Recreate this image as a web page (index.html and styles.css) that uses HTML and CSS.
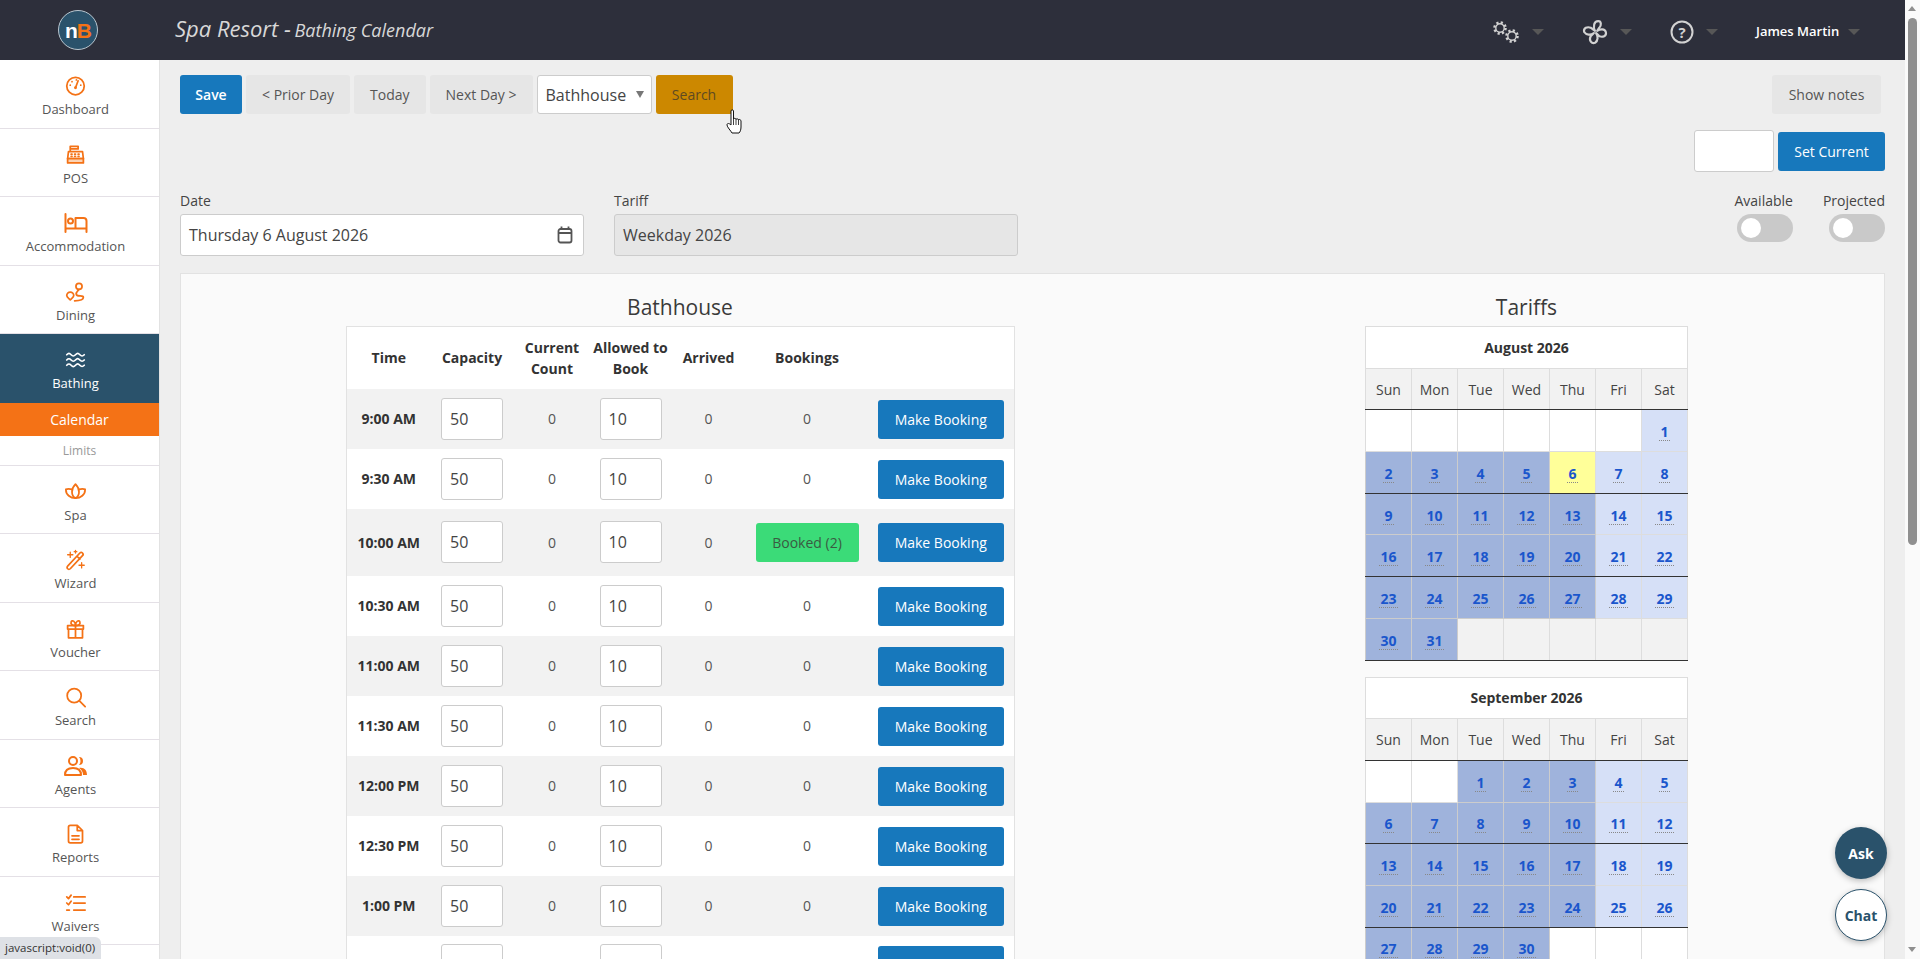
FILE: index.html
```html
<!DOCTYPE html>
<html>
<head>
  <title>Bathing Calendar</title>
  <link rel="stylesheet" href="styles.css">
</head>
<body>
  <div class="page">
    <header class="topbar">
      <div class="logo-box"><div class="logo"><span class="logo-n">n</span><span class="logo-b">B</span></div></div>
      <div class="title"><span class="title-main">Spa Resort -</span> <span class="title-sub">Bathing Calendar</span></div>
      <div class="top-right">
        <div class="top-item">
          <svg class="gears" viewBox="0 0 28 24" fill="none" stroke="#d2d2d2">
            <circle cx="8" cy="8" r="5.6" stroke-width="2.4" stroke-dasharray="2.2 2.2"/><circle cx="8" cy="8" r="4.2" stroke-width="1.4"/>
            <circle cx="20" cy="16" r="5.6" stroke-width="2.4" stroke-dasharray="2.2 2.2"/><circle cx="20" cy="16" r="4.2" stroke-width="1.4"/>
          </svg>
          <span class="caret"></span>
        </div>
        <div class="top-item">
          <svg class="fan" viewBox="0 0 24 24" fill="none" stroke="#d2d2d2" stroke-width="2" stroke-linejoin="round">
            <path d="M12 11C10 7 11 2 15 2c3 0 3 4 1 6l-2 3c3-2 7-2 8 1 1 4-3 5-6 4l-3-3c2 3 2 7-1 9-3 1-6-2-4-6l3-3c-3 2-7 2-9-1-1-4 3-5 6-4z"/>
          </svg>
          <span class="caret"></span>
        </div>
        <div class="top-item">
          <svg class="help" viewBox="0 0 24 24" fill="none" stroke="#d2d2d2" stroke-width="2">
            <circle cx="12" cy="12" r="10.5"/>
            <text x="12" y="17.5" text-anchor="middle" class="help-mark">?</text>
          </svg>
          <span class="caret"></span>
        </div>
        <div class="top-item">
          <span class="user">James Martin</span>
          <span class="caret"></span>
        </div>
      </div>
    </header>

    <div class="layout">
      <nav class="sidebar">
        <a class="nav-item">
          <svg class="nav-icon" viewBox="0 0 24 24"><circle cx="12" cy="12" r="10"/><path d="M12 14l3-8"/><circle class="dot" cx="12" cy="14" r="1.6"/><circle class="dot" cx="6" cy="11" r="1"/><circle class="dot" cx="8" cy="7" r="1"/><circle class="dot" cx="18" cy="11" r="1"/><circle class="dot" cx="13" cy="5" r="1"/></svg>
          <span>Dashboard</span>
        </a>
        <a class="nav-item">
          <svg class="nav-icon" viewBox="0 0 24 24"><path d="M6 7V2h9v3H6"/><path d="M4 8h16l1 8H3z"/><path class="fill-soft" d="M3 16h18v5H3z"/><path d="M7 11h1M11 11h1M15 11h1M7 13.500h1M11 13.500h1M15 13.500h1"/></svg>
          <span>POS</span>
        </a>
        <a class="nav-item">
          <svg class="nav-icon nav-icon-wide" viewBox="0 0 24 20"><path d="M1.500 1v18M1.500 15.500h21M22.500 19v-11a3 3 0 0 0-3-3h-8v10"/><circle cx="6.500" cy="8" r="2.500"/></svg>
          <span>Accommodation</span>
        </a>
        <a class="nav-item">
          <svg class="nav-icon" viewBox="0 0 24 24"><circle cx="16" cy="5.500" r="3.500"/><path d="M16 9c-1 2-4 3-3 6s8 0 8 3-3 4-10 4"/><path d="M6 21c-2-2-4-3-4-5a4 4 0 0 1 8 0c0 2-2 3-4 5z"/></svg>
          <span>Dining</span>
        </a>
        <a class="nav-item nav-item-active">
          <svg class="nav-icon" viewBox="0 0 24 24"><path d="M2 6c2-2 3-2 5 0s3 2 5 0 3-2 5 0 3 2 5 0M2 12c2-2 3-2 5 0s3 2 5 0 3-2 5 0 3 2 5 0M2 18c2-2 3-2 5 0s3 2 5 0 3-2 5 0 3 2 5 0"/></svg>
          <span>Bathing</span>
        </a>
        <a class="sub-item sub-item-active">Calendar</a>
        <a class="sub-item">Limits</a>
        <a class="nav-item">
          <svg class="nav-icon" viewBox="0 0 24 24"><path d="M12 3c3 3 4 6 4 9s-2 6-4 7c-2-1-4-4-4-7s1-6 4-9z"/><path d="M8 9c-3-1-5-1-7 0 0 6 5 10 11 10s11-4 11-10c-2-1-4-1-7 0"/></svg>
          <span>Spa</span>
        </a>
        <a class="nav-item">
          <svg class="nav-icon" viewBox="0 0 24 24"><path d="M3 19L17 4a2 2 0 0 1 3 3L6 22a2 2 0 0 1-3-3zM14 8l3 3"/><path class="thin" d="M6 3v6M3 6h6M19 15v6M16 18h6M12 1v3M10.500 2.500h3"/></svg>
          <span>Wizard</span>
        </a>
        <a class="nav-item">
          <svg class="nav-icon" viewBox="0 0 24 24"><path d="M3 8h18v4H3zM4 12h16v10H4zM12 8v14"/><path d="M12 8C9 8 6 7 7 4s5-1 5 4c0-5 4-7 5-4s-2 4-5 4z"/></svg>
          <span>Voucher</span>
        </a>
        <a class="nav-item">
          <svg class="nav-icon" viewBox="0 0 24 24"><circle cx="10.500" cy="10.500" r="8"/><path d="M16.500 16.500L23 23"/></svg>
          <span>Search</span>
        </a>
        <a class="nav-item">
          <svg class="nav-icon nav-icon-wide" viewBox="0 0 24 20"><circle cx="9" cy="5" r="4"/><path d="M1 19c0-5 3-7 8-7s8 2 8 7z"/><path class="solid" d="M15 1a4 4 0 0 1 0 8 6 6 0 0 0 0-8zM15 12c5-1 8 2 8 7h-4c0-3-1-5-4-7z"/></svg>
          <span>Agents</span>
        </a>
        <a class="nav-item">
          <svg class="nav-icon" viewBox="0 0 24 24"><path d="M6 2h8l6 6v12a2 2 0 0 1-2 2H6a2 2 0 0 1-2-2V4a2 2 0 0 1 2-2zM14 2v6h6M8 14h8M8 18h8"/></svg>
          <span>Reports</span>
        </a>
        <a class="nav-item">
          <svg class="nav-icon" viewBox="0 0 24 24"><path d="M2 5l2 2 3-4M2 12l2 2 3-4M2 20h3M10 5h13M10 12h13M10 20h13"/></svg>
          <span>Waivers</span>
        </a>
        <a class="nav-item">
          <svg class="nav-icon" viewBox="0 0 24 24"><circle cx="12" cy="12" r="9"/></svg>
          <span>Settings</span>
        </a>
      </nav>

      <main class="main">
        <div class="toolbar">
          <button class="btn btn-primary btn-save">Save</button>
          <button class="btn">&lt; Prior Day</button>
          <button class="btn">Today</button>
          <button class="btn">Next Day &gt;</button>
          <div class="select">Bathhouse<span class="select-caret"></span></div>
          <button class="btn btn-search">Search</button>
          <button class="btn btn-notes">Show notes</button>
        </div>

        <div class="current-row">
          <input type="text" class="field field-current">
          <button class="btn btn-primary btn-current">Set Current</button>
        </div>

        <div class="filter-row">
          <div class="filter-group">
            <label class="filter-label">Date</label>
            <div class="field date-field">Thursday 6 August 2026
              <svg class="date-icon" viewBox="0 0 16 18" fill="none" stroke="#555" stroke-width="1.800"><rect x="1.500" y="3" width="13" height="13.500" rx="2"/><path d="M1.500 7h13M4.500 .5v3M11.500 .5v3"/></svg>
            </div>
          </div>
          <div class="filter-group">
            <label class="filter-label">Tariff</label>
            <div class="field date-field field-disabled">Weekday 2026</div>
          </div>
          <div class="toggle-group toggle-first">
            <label class="filter-label">Available</label>
            <span class="toggle"></span>
          </div>
          <div class="toggle-group">
            <label class="filter-label">Projected</label>
            <span class="toggle"></span>
          </div>
        </div>

        <section class="panel">
          <div class="slots">
            <h3>Bathhouse</h3>
            <table class="slot-table">
              <thead>
                <tr>
                  <th class="col-time">Time</th>
                  <th class="col-cap">Capacity</th>
                  <th class="col-count">Current Count</th>
                  <th class="col-allowed">Allowed to Book</th>
                  <th class="col-arrived">Arrived</th>
                  <th class="col-bookings">Bookings</th>
                  <th class="col-action"></th>
                </tr>
              </thead>
              <tbody>
                <tr><th>9:00 AM</th><td><input class="field slot-input" value="50"></td><td>0</td><td><input class="field slot-input" value="10"></td><td>0</td><td>0</td><td><button class="btn btn-primary btn-book">Make Booking</button></td></tr>
                <tr><th>9:30 AM</th><td><input class="field slot-input" value="50"></td><td>0</td><td><input class="field slot-input" value="10"></td><td>0</td><td>0</td><td><button class="btn btn-primary btn-book">Make Booking</button></td></tr>
                <tr><th>10:00 AM</th><td><input class="field slot-input" value="50"></td><td>0</td><td><input class="field slot-input" value="10"></td><td>0</td><td><button class="btn btn-booked">Booked (2)</button></td><td><button class="btn btn-primary btn-book">Make Booking</button></td></tr>
                <tr><th>10:30 AM</th><td><input class="field slot-input" value="50"></td><td>0</td><td><input class="field slot-input" value="10"></td><td>0</td><td>0</td><td><button class="btn btn-primary btn-book">Make Booking</button></td></tr>
                <tr><th>11:00 AM</th><td><input class="field slot-input" value="50"></td><td>0</td><td><input class="field slot-input" value="10"></td><td>0</td><td>0</td><td><button class="btn btn-primary btn-book">Make Booking</button></td></tr>
                <tr><th>11:30 AM</th><td><input class="field slot-input" value="50"></td><td>0</td><td><input class="field slot-input" value="10"></td><td>0</td><td>0</td><td><button class="btn btn-primary btn-book">Make Booking</button></td></tr>
                <tr><th>12:00 PM</th><td><input class="field slot-input" value="50"></td><td>0</td><td><input class="field slot-input" value="10"></td><td>0</td><td>0</td><td><button class="btn btn-primary btn-book">Make Booking</button></td></tr>
                <tr><th>12:30 PM</th><td><input class="field slot-input" value="50"></td><td>0</td><td><input class="field slot-input" value="10"></td><td>0</td><td>0</td><td><button class="btn btn-primary btn-book">Make Booking</button></td></tr>
                <tr><th>1:00 PM</th><td><input class="field slot-input" value="50"></td><td>0</td><td><input class="field slot-input" value="10"></td><td>0</td><td>0</td><td><button class="btn btn-primary btn-book">Make Booking</button></td></tr>
                <tr><th>1:30 PM</th><td><input class="field slot-input" value="50"></td><td>0</td><td><input class="field slot-input" value="10"></td><td>0</td><td>0</td><td><button class="btn btn-primary btn-book">Make Booking</button></td></tr>
              </tbody>
            </table>
          </div>

          <div class="tariffs">
            <h3>Tariffs</h3>
            <table class="cal">
              <thead>
                <tr><th colspan="7" class="cal-title">August 2026</th></tr>
                <tr class="line"><td class="d1">Sun</td><td class="d2">Mon</td><td class="d3">Tue</td><td class="d4">Wed</td><td class="d5">Thu</td><td class="d6">Fri</td><td class="d7">Sat</td></tr>
              </thead>
              <tbody>
                <tr><td></td><td></td><td></td><td></td><td></td><td></td><td class="we"><a>1</a></td></tr>
                <tr class="line"><td class="wk"><a>2</a></td><td class="wk"><a>3</a></td><td class="wk"><a>4</a></td><td class="wk"><a>5</a></td><td class="today"><a>6</a></td><td class="we"><a>7</a></td><td class="we"><a>8</a></td></tr>
                <tr><td class="wk"><a>9</a></td><td class="wk"><a>10</a></td><td class="wk"><a>11</a></td><td class="wk"><a>12</a></td><td class="wk"><a>13</a></td><td class="we"><a>14</a></td><td class="we"><a>15</a></td></tr>
                <tr class="line"><td class="wk"><a>16</a></td><td class="wk"><a>17</a></td><td class="wk"><a>18</a></td><td class="wk"><a>19</a></td><td class="wk"><a>20</a></td><td class="we"><a>21</a></td><td class="we"><a>22</a></td></tr>
                <tr><td class="wk"><a>23</a></td><td class="wk"><a>24</a></td><td class="wk"><a>25</a></td><td class="wk"><a>26</a></td><td class="wk"><a>27</a></td><td class="we"><a>28</a></td><td class="we"><a>29</a></td></tr>
                <tr class="line"><td class="wk"><a>30</a></td><td class="wk"><a>31</a></td><td class="none"></td><td class="none"></td><td class="none"></td><td class="none"></td><td class="none"></td></tr>
              </tbody>
            </table>
            <table class="cal">
              <thead>
                <tr><th colspan="7" class="cal-title">September 2026</th></tr>
                <tr class="line"><td class="d1">Sun</td><td class="d2">Mon</td><td class="d3">Tue</td><td class="d4">Wed</td><td class="d5">Thu</td><td class="d6">Fri</td><td class="d7">Sat</td></tr>
              </thead>
              <tbody>
                <tr><td></td><td></td><td class="wk"><a>1</a></td><td class="wk"><a>2</a></td><td class="wk"><a>3</a></td><td class="we"><a>4</a></td><td class="we"><a>5</a></td></tr>
                <tr class="line"><td class="wk"><a>6</a></td><td class="wk"><a>7</a></td><td class="wk"><a>8</a></td><td class="wk"><a>9</a></td><td class="wk"><a>10</a></td><td class="we"><a>11</a></td><td class="we"><a>12</a></td></tr>
                <tr><td class="wk"><a>13</a></td><td class="wk"><a>14</a></td><td class="wk"><a>15</a></td><td class="wk"><a>16</a></td><td class="wk"><a>17</a></td><td class="we"><a>18</a></td><td class="we"><a>19</a></td></tr>
                <tr class="line"><td class="wk"><a>20</a></td><td class="wk"><a>21</a></td><td class="wk"><a>22</a></td><td class="wk"><a>23</a></td><td class="wk"><a>24</a></td><td class="we"><a>25</a></td><td class="we"><a>26</a></td></tr>
                <tr><td class="wk"><a>27</a></td><td class="wk"><a>28</a></td><td class="wk"><a>29</a></td><td class="wk"><a>30</a></td><td></td><td></td><td></td></tr>
              </tbody>
            </table>
          </div>
        </section>
      </main>
    </div>
  </div>

  <div class="scrollbar">
    <span class="arrow-up"></span>
    <span class="thumb"></span>
    <span class="arrow-down"></span>
  </div>

  <!-- things floating over the page -->
  <a class="float-btn float-ask">Ask</a>
  <a class="float-btn float-chat">Chat</a>
  <div class="status">javascript:void(0)</div>
  <svg class="cursor" viewBox="0 0 18 25" fill="#fff" stroke="#111" stroke-width="1" stroke-linejoin="round">
    <path d="M5 2c0-1.500 2.500-1.500 2.500 0v8c0-1 2.500-1 2.500 .5 0-1 2.500-1 2.500 .5 0-1 2.500-.5 2.500 1v6c0 3-1 5-2 6H6c-1-2-5-6-5-8s2-2 4 0z"/>
    <path d="M7.500 10v6M10 10.500v5.500M12.500 11v5" stroke-width=".8"/>
  </svg>
</body>
</html>
```
FILE: styles.css
```css
* {
  box-sizing: border-box;
}

html, body {
  margin: 0;
  height: 100%;
  overflow: hidden;
}

body {
  display: flex;
  font-family: "Open Sans", Arial, sans-serif;
  font-size: 14px;
  color: #444;
  background-color: #eee;
}

.page {
  flex: 1;
  min-width: 0;
  display: flex;
  flex-direction: column;
}

/* Top bar */
.topbar {
  flex: none;
  height: 60px;
  display: flex;
  align-items: center;
  background-color: #2d2f3b;
}

.logo-box {
  width: 175px;
  padding-left: 58px;
}

.logo {
  width: 40px;
  height: 40px;
  border-radius: 50%;
  border: 1px solid #b9c6cf;
  background-color: #2a526b;
  display: flex;
  align-items: center;
  justify-content: center;
  font-family: "Liberation Sans", Arial, sans-serif;
  font-weight: bold;
  font-size: 21px;
  line-height: 1;
  letter-spacing: -1px;
}

.logo-n {
  color: #fff;
}

.logo-b {
  color: #f47216;
}

.title {
  color: #d8d8d8;
  font-style: italic;
  margin-top: -5px;
}

.title-main {
  font-size: 22px;
}

.title-sub {
  font-size: 18px;
}

.top-right {
  margin-left: auto;
  padding-right: 45px;
  display: flex;
  align-items: center;
  gap: 38px;
  margin-top: 4px;
}

.top-item {
  display: flex;
  align-items: center;
  gap: 12px;
}

.gears {
  width: 28px;
  height: 24px;
}

.fan {
  width: 26px;
  height: 26px;
}

.help {
  width: 24px;
  height: 24px;
}

.help-mark {
  font-family: "Open Sans", Arial, sans-serif;
  font-size: 15px;
  font-weight: bold;
  fill: #d2d2d2;
  stroke: none;
}

.caret {
  width: 0;
  height: 0;
  border-left: 6px solid transparent;
  border-right: 6px solid transparent;
  border-top: 6px solid #575757;
}

.user {
  color: #fff;
  font-size: 13px;
  font-weight: 600;
  margin-top: -3px;
  width: 80px;
  white-space: nowrap;
}

.layout {
  flex: 1;
  min-height: 0;
  display: flex;
}

/* Sidebar */
.sidebar {
  flex: none;
  width: 160px;
  background-color: #fff;
  border-right: 1px solid #e2e2e2;
  overflow: hidden;
}

.nav-item {
  height: 68.5px;
  padding: 15px 8px 0 0;
  display: flex;
  flex-direction: column;
  align-items: center;
  border-bottom: 1px solid #e4e0e6;
  font-size: 13px;
  color: #555;
}

.nav-item span {
  margin-top: 3px;
  line-height: 18px;
}

.nav-icon {
  width: 21px;
  height: 22px;
  fill: none;
  stroke: #f47216;
  stroke-width: 2;
  stroke-linejoin: round;
  stroke-linecap: round;
}

.nav-icon-wide {
  width: 24px;
}

.nav-icon .dot,
.nav-icon .solid {
  fill: #f47216;
  stroke: none;
}

.nav-icon .fill-soft {
  fill: #fbd3b4;
}

.nav-icon .thin {
  stroke-width: 1.500;
}

.nav-item-active {
  background-color: #2a526b;
  color: #fff;
  border-bottom: none;
}

.nav-item-active .nav-icon {
  stroke: #fff;
}

.sub-item {
  display: block;
  text-align: center;
  height: 30px;
  line-height: 29px;
  font-size: 12px;
  color: #999;
  border-bottom: 1px solid #e4e0e6;
}

.sub-item-active {
  height: 33px;
  line-height: 33px;
  font-size: 14px;
  color: #fff;
  background-color: #f47216;
  border-bottom: none;
}

/* Main area */
.main {
  flex: 1;
  min-width: 0;
  padding: 15px 20px 0;
  overflow: hidden;
}

.btn {
  height: 39px;
  padding: 0 16px;
  border: none;
  border-radius: 3px;
  font-family: inherit;
  font-size: 14px;
  color: #555;
  background-color: #e6e6e6;
  cursor: pointer;
  white-space: nowrap;
}

.btn-primary {
  color: #fff;
  background-color: #1778bc;
}

.btn-search {
  color: #5e4a22;
  background-color: #cc8800;
  width: 77px;
  padding: 0;
}

.btn-save {
  font-weight: 600;
  width: 62px;
  padding: 0;
}

.btn-notes {
  margin-left: auto;
  margin-right: 4px;
  width: 109px;
  padding: 0;
}

.toolbar {
  display: flex;
  gap: 4px;
}

.field {
  border: 1px solid #ccc;
  border-radius: 3px;
  background-color: #fff;
  font-family: inherit;
  font-size: 16px;
  color: #444;
}

.select {
  width: 115px;
  height: 39px;
  padding-left: 8px;
  display: flex;
  align-items: center;
  border: 1px solid #ccc;
  border-radius: 3px;
  background-color: #fff;
  font-size: 16px;
  position: relative;
}

.select-caret {
  margin-left: auto;
  margin-right: 7px;
  width: 0;
  height: 0;
  border-left: 4px solid transparent;
  border-right: 4px solid transparent;
  border-top: 7px solid #777;
}

.current-row {
  margin-top: 16px;
  height: 42px;
  display: flex;
  justify-content: flex-end;
  align-items: center;
  gap: 4px;
}

.field-current {
  width: 80px;
  height: 42px;
}

.btn-current {
  width: 107px;
  padding: 0;
}

.filter-row {
  margin-top: 19px;
  display: flex;
  gap: 30px;
}

.filter-label {
  display: block;
  height: 23px;
  line-height: 20px;
  font-size: 14px;
  white-space: nowrap;
}

.date-field {
  width: 404px;
  height: 42px;
  padding: 0 8px;
  display: flex;
  align-items: center;
  justify-content: space-between;
}

.field-disabled {
  background-color: #e6e6e6;
}

.date-icon {
  width: 16px;
  height: 18px;
  margin-right: 2px;
}

.toggle-group {
  display: flex;
  flex-direction: column;
  align-items: flex-end;
}

.toggle-first {
  margin-left: auto;
}

.toggle {
  width: 56px;
  height: 28px;
  border-radius: 14px;
  background-color: #c9c9c9;
  padding: 4px;
}

.toggle::before {
  content: "";
  display: block;
  width: 20px;
  height: 20px;
  border-radius: 50%;
  background-color: #fff;
}

/* Panel */
.panel {
  margin-top: 17px;
  height: 800px;
  padding-top: 15px;
  display: flex;
  align-items: flex-start;
  background-color: #fafafa;
  border: 1px solid #e2e2e2;
}

.panel h3 {
  margin: 0;
  height: 37px;
  line-height: 36px;
  text-align: center;
  font-size: 21px;
  font-weight: 400;
  color: #3a3a3a;
}

.slots {
  margin-left: 165px;
  width: 668px;
}

.tariffs {
  margin-left: 351px;
  width: 323px;
}

.slot-table {
  width: 100%;
  table-layout: fixed;
  border-collapse: collapse;
  background-color: #fff;
  border: 1px solid #e2e2e2;
  text-align: center;
}

.slot-table thead th {
  height: 62px;
  padding: 0;
  line-height: 21px;
  font-weight: 700;
  font-size: 14px;
  color: #333;
}

.slot-table tbody th {
  font-weight: 700;
  color: #333;
  padding: 0;
}

.slot-table td {
  padding: 0;
  height: 60px;
  font-size: 14px;
  color: #555;
}

.slot-table tbody tr:nth-child(odd) {
  background-color: #f2f2f2;
}

.col-time { width: 84px; }
.col-cap { width: 83px; }
.col-count { width: 77px; }
.col-allowed { width: 80px; }
.col-arrived { width: 76px; }
.col-bookings { width: 121px; }
.col-action { width: 147px; }

.slot-input {
  display: block;
  margin: 0 auto;
  width: 62px;
  height: 42px;
  padding: 0 8px;
}

.btn-book {
  display: block;
  margin: 1px auto 0;
  width: 126px;
  padding: 0;
}

.btn-booked {
  display: block;
  margin: 14px auto;
  width: 103px;
  padding: 0;
  color: #3a5a42;
  background-color: #3bdb78;
}

/* Tariff calendars */
.cal {
  width: 100%;
  table-layout: fixed;
  border-collapse: collapse;
  margin-bottom: 16px;
  background-color: #fff;
  text-align: center;
}

.cal td,
.cal th {
  border: 1px solid #ddd;
  padding: 0;
  height: 41.7px;
}

.cal thead td {
  background-color: #f2f2f2;
  color: #444;
}

.cal .line td {
  border-bottom: 1px solid #333;
}

.cal-title {
  font-weight: 700;
  font-size: 14px;
  color: #333;
  height: 41px;
}

.d1 { width: 46px; }
.d2 { width: 52px; }
.d3 { width: 46px; }
.d4 { width: 51px; }
.d5 { width: 47px; }
.d6 { width: 38px; }
.d7 { width: 43px; }

.cal a {
  display: inline-block;
  font-weight: 700;
  font-size: 14px;
  line-height: 16px;
  padding: 0 1px;
  margin-top: 4px;
  color: #1a56cc;
  border-bottom: 1px dotted #888;
}

.cal .wk {
  background-color: #9fb3dc;
  border-color: #ccc;
}

.cal .we {
  background-color: #d6e0f7;
}

.cal .today {
  background-color: #ffff99;
}

.cal .none {
  background-color: #f2f2f2;
}

/* Scrollbar */
.scrollbar {
  flex: none;
  width: 15px;
  height: 100%;
  background-color: #fafafa;
  position: relative;
}

.thumb {
  position: absolute;
  left: 3px;
  top: 18px;
  width: 9px;
  height: 527px;
  border-radius: 5px;
  background-color: #8f8f8f;
}

.arrow-up,
.arrow-down {
  position: absolute;
  left: 3px;
  width: 0;
  height: 0;
  border-left: 4.500px solid transparent;
  border-right: 4.500px solid transparent;
}

.arrow-up {
  top: 6px;
  border-bottom: 5px solid #8f8f8f;
}

.arrow-down {
  bottom: 7px;
  border-top: 5px solid #8f8f8f;
}

/* Floating buttons, status bubble, pointer */
.float-btn {
  position: absolute;
  left: 1835px;
  width: 52px;
  height: 52px;
  border-radius: 50%;
  display: flex;
  align-items: center;
  justify-content: center;
  font-weight: 700;
  font-size: 14px;
  box-shadow: 0 2px 6px rgba(0, 0, 0, 0.25);
}

.float-ask {
  top: 827px;
  color: #fff;
  background-color: #2a526b;
}

.float-chat {
  top: 889px;
  color: #2a526b;
  background-color: #fff;
  border: 1px solid #2a526b;
}

.status {
  position: absolute;
  left: 0;
  bottom: 0;
  height: 22px;
  width: 101px;
  padding-left: 5px;
  line-height: 22px;
  font-size: 11.500px;
  color: #333;
  white-space: nowrap;
  background-color: #dee1e6;
  border-top-right-radius: 6px;
}

.cursor {
  position: absolute;
  left: 726px;
  top: 109px;
  width: 18px;
  height: 25px;
}
```
